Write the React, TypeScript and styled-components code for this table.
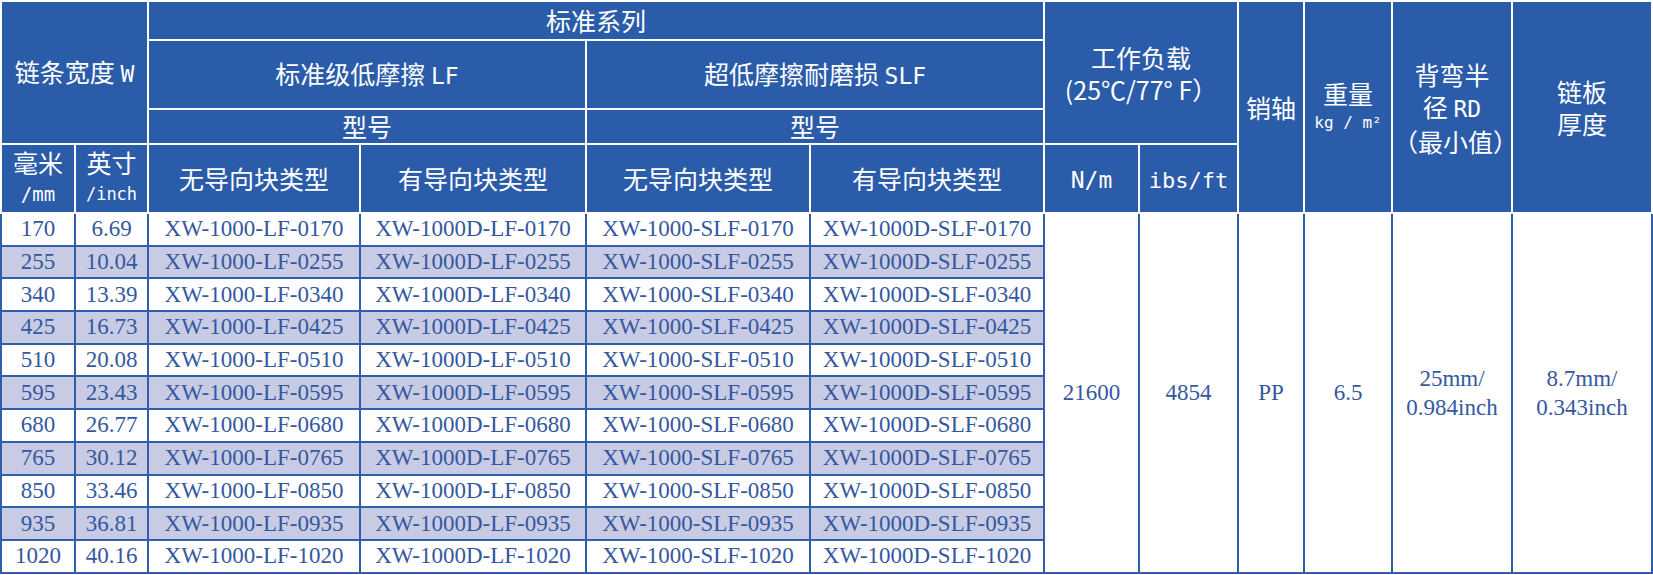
import React from "react";
import styled, { createGlobalStyle } from "styled-components";

const Global = createGlobalStyle`
  html, body { margin: 0; padding: 0; background: #ffffff; }
`;

const HEAD_BG = "#2b5caa";
const LINE_BLUE = "#2f5eab";
const TEXT_BLUE = "#34589f";
const STRIPE = "#c8cbe4";

const Table = styled.table`
  width: 1651px;
  border-collapse: collapse;
  table-layout: fixed;
  font-family: "Noto Sans CJK SC", "Noto Sans", sans-serif;
`;

const Head = styled.th<{ $h?: number; $lh?: number }>`
  background: ${HEAD_BG};
  color: #ffffff;
  font-weight: 400;
  font-size: 25px;
  line-height: ${(p) => p.$lh ?? 31}px;
  text-align: center;
  vertical-align: middle;
  border: 2px solid #ffffff;
  padding: 0;
  height: ${(p) => (p.$h ? `${p.$h}px` : "auto")};
  box-sizing: border-box;
  white-space: nowrap;
`;

const Latin = styled.span<{ $size?: number }>`
  font-family: "DejaVu Sans Mono", "Liberation Mono", monospace;
  font-weight: 400;
  font-size: ${(p) => p.$size ?? 23}px;
`;

const Small = styled.div<{ $lh?: number; $size?: number }>`
  font-family: "DejaVu Sans Mono", "Liberation Mono", monospace;
  font-weight: 400;
  font-size: ${(p) => p.$size ?? 19}px;
  line-height: ${(p) => p.$lh ?? 30}px;
`;

const Row = styled.tr<{ $alt?: boolean }>`
  background: ${(p) => (p.$alt ? STRIPE : "#ffffff")};
  height: 32.7px;
`;

const Cell = styled.td<{ $tall?: boolean }>`
  border: 2px solid ${LINE_BLUE};
  color: ${TEXT_BLUE};
  font-family: "Liberation Serif", "Times New Roman", serif;
  font-size: 23px;
  line-height: ${(p) => (p.$tall ? "29px" : "26px")};
  text-align: center;
  vertical-align: middle;
  padding: 0;
  background: ${(p) => (p.$tall ? "#ffffff" : "inherit")};
  white-space: nowrap;
`;

const widths = [74, 73, 212, 226, 224, 234, 95, 99, 66, 88, 120, 140];

const rows: [string, string][] = [
  ["170", "6.69"],
  ["255", "10.04"],
  ["340", "13.39"],
  ["425", "16.73"],
  ["510", "20.08"],
  ["595", "23.43"],
  ["680", "26.77"],
  ["765", "30.12"],
  ["850", "33.46"],
  ["935", "36.81"],
  ["1020", "40.16"],
];

const code = (mm: string, d: boolean, s: boolean) => {
  const n = mm.padStart(4, "0");
  return `XW-1000${d ? "D" : ""}-${s ? "SLF" : "LF"}-${n}`;
};

export default function App() {
  return (
    <>
      <Global />
      <Table>
        <colgroup>
          {widths.map((w, i) => (
            <col key={i} style={{ width: w }} />
          ))}
        </colgroup>
        <thead>
          <tr>
            <Head rowSpan={3} colSpan={2}>
              链条宽度 <Latin>W</Latin>
            </Head>
            <Head colSpan={4} $h={39}>
              标准系列
            </Head>
            <Head rowSpan={3} colSpan={2} $lh={32}>
              工作负载
              <br />
              (25℃/77° F）
            </Head>
            <Head rowSpan={4}>销轴</Head>
            <Head rowSpan={4}>
              重量
              <Small $lh={28} $size={16}>
                kg / m²
              </Small>
            </Head>
            <Head rowSpan={4} $lh={32}>
              背弯半
              <br />径 <Latin>RD</Latin>
              <br />
              （最小值）
            </Head>
            <Head rowSpan={4} $lh={32}>
              链板
              <br />
              厚度
            </Head>
          </tr>
          <tr>
            <Head colSpan={2} $h={69}>
              标准级低摩擦 <Latin>LF</Latin>
            </Head>
            <Head colSpan={2}>
              超低摩擦耐磨损 <Latin>SLF</Latin>
            </Head>
          </tr>
          <tr>
            <Head colSpan={2} $h={35}>
              型号
            </Head>
            <Head colSpan={2}>型号</Head>
          </tr>
          <tr>
            <Head $h={69} $lh={30}>
              毫米
              <Small $lh={34}>/mm</Small>
            </Head>
            <Head $lh={30}>
              英寸
              <Small $lh={34} $size={17}>/inch</Small>
            </Head>
            <Head>无导向块类型</Head>
            <Head>有导向块类型</Head>
            <Head>无导向块类型</Head>
            <Head>有导向块类型</Head>
            <Head>
              <Latin $size={23}>N/m</Latin>
            </Head>
            <Head>
              <Latin $size={22}>ibs/ft</Latin>
            </Head>
          </tr>
        </thead>
        <tbody>
          {rows.map(([mm, inch], i) => (
            <Row key={mm} $alt={i % 2 === 1}>
              <Cell>{mm}</Cell>
              <Cell>{inch}</Cell>
              <Cell>{code(mm, false, false)}</Cell>
              <Cell>{code(mm, true, false)}</Cell>
              <Cell>{code(mm, false, true)}</Cell>
              <Cell>{code(mm, true, true)}</Cell>
              {i === 0 && (
                <>
                  <Cell rowSpan={11} $tall>21600</Cell>
                  <Cell rowSpan={11} $tall>4854</Cell>
                  <Cell rowSpan={11} $tall>PP</Cell>
                  <Cell rowSpan={11} $tall>6.5</Cell>
                  <Cell rowSpan={11} $tall>
                    25mm/
                    <br />
                    0.984inch
                  </Cell>
                  <Cell rowSpan={11} $tall>
                    8.7mm/
                    <br />
                    0.343inch
                  </Cell>
                </>
              )}
            </Row>
          ))}
        </tbody>
      </Table>
    </>
  );
}
